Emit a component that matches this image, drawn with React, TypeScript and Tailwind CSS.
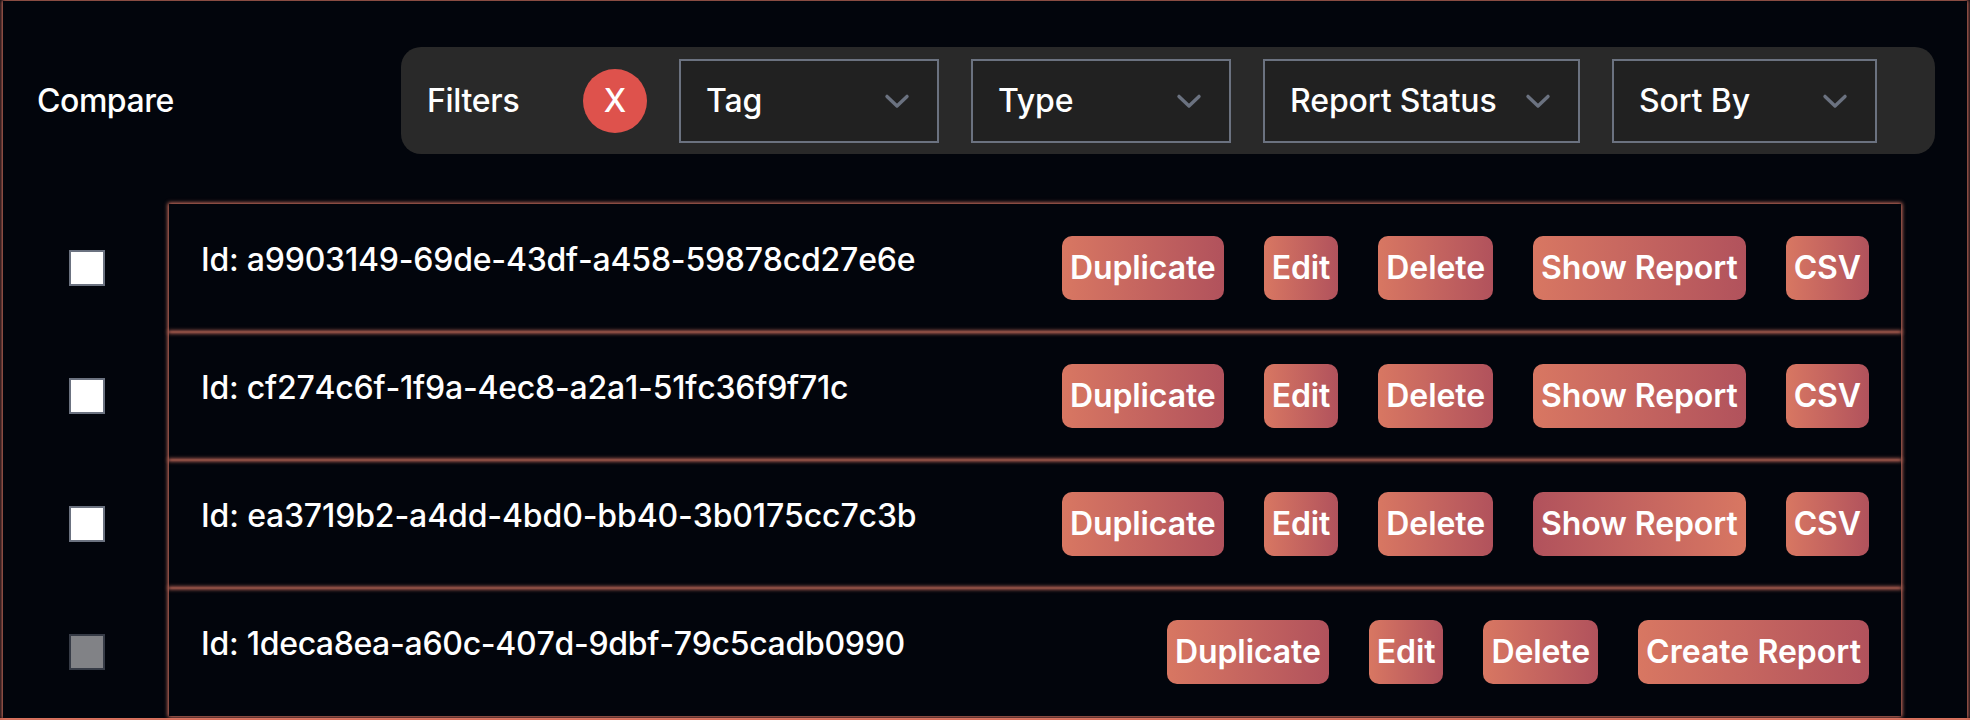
const filters = [
  { label: "Tag", width: "w-[260px]" },
  { label: "Type", width: "w-[260px]" },
  { label: "Report Status", width: "w-[317px]" },
  { label: "Sort By", width: "w-[265px]" },
];

const full = ["Duplicate", "Edit", "Delete", "Show Report", "CSV"];

const rows = [
  { id: "a9903149-69de-43df-a458-59878cd27e6e", actions: full, tracking: "tracking-[-0.22px]" },
  { id: "cf274c6f-1f9a-4ec8-a2a1-51fc36f9f71c", actions: full, tracking: "tracking-[-0.22px]" },
  {
    id: "ea3719b2-a4dd-4bd0-bb40-3b0175cc7c3b",
    actions: full,
    active: "Show Report",
    tracking: "tracking-[-0.13px]",
  },
  {
    id: "1deca8ea-a60c-407d-9dbf-79c5cadb0990",
    actions: ["Duplicate", "Edit", "Delete", "Create Report"],
    disabled: true,
    tracking: "tracking-[-0.28px]",
  },
];

export default function App() {
  return (
    <div className="h-[720px] w-[1970px] overflow-hidden bg-[#c66452] font-['Inter',sans-serif] text-[32px] leading-[48px] font-[450] text-white">
      <div className="h-[718px] bg-[#02050c] pt-px pr-[3px] pl-[3px]">
        <div className="h-[717px] shadow-[0_0_4px_1px_#e67c68]">
          <header className="flex h-[203px] items-start justify-between pt-[46px] pr-[32px] pl-[34px]">
            <h1 className="pt-[30px] tracking-[-0.45px]">Compare</h1>
            <div className="flex h-[107px] w-[1534px] items-center rounded-[20px] bg-[#292929] pl-[26px]">
              <span className="w-[156px] tracking-[-0.3px]">Filters</span>
              <button className="mr-8 size-16 rounded-full bg-[#de524c] text-center">X</button>
              <div className="flex gap-8">
                {filters.map((f) => (
                  <button
                    key={f.label}
                    className={`flex h-[84px] items-center justify-between border-2 border-[#6b7280] bg-[#212121] pr-[20px] pl-[25px] tracking-[-0.1px] whitespace-nowrap ${f.width}`}
                  >
                    <span>{f.label}</span>
                    <svg
                      viewBox="0 0 20 20"
                      className="size-10 fill-none stroke-[#6b7280] stroke-[1.7]"
                      strokeLinecap="round"
                      strokeLinejoin="round"
                    >
                      <path d="M5 7.7 10 12.5 15 7.7" />
                    </svg>
                  </button>
                ))}
              </div>
            </div>
          </header>
          <main>
            {rows.map((row) => (
              <div key={row.id} className="flex h-32">
                <div className="flex w-[166px] items-center pl-[66px]">
                  <input
                    type="checkbox"
                    disabled={row.disabled}
                    className="size-9 appearance-none border-2 border-[#6b7280] bg-white disabled:opacity-50"
                  />
                </div>
                <div className="flex w-[1732px] shrink-0 justify-between pt-8 pr-8 pl-8 shadow-[0_0_4px_1px_#e67c68]">
                  <p className={`[font-kerning:none] ${row.tracking}`}>Id: {row.id}</p>
                  <div className="flex gap-10">
                    {row.actions.map((a) => (
                      <button
                        key={a}
                        className={`h-16 rounded-[10px] bg-linear-to-r px-2 font-semibold ${
                          a === "Create Report" ? "tracking-[0.03px]" : "tracking-[-0.1px]"
                        } ${row.active === a ? "from-[#b1525c] to-[#d87762]" : "from-[#d87762] to-[#b1525c]"}`}
                      >
                        {a}
                      </button>
                    ))}
                  </div>
                </div>
              </div>
            ))}
          </main>
        </div>
      </div>
    </div>
  );
}
